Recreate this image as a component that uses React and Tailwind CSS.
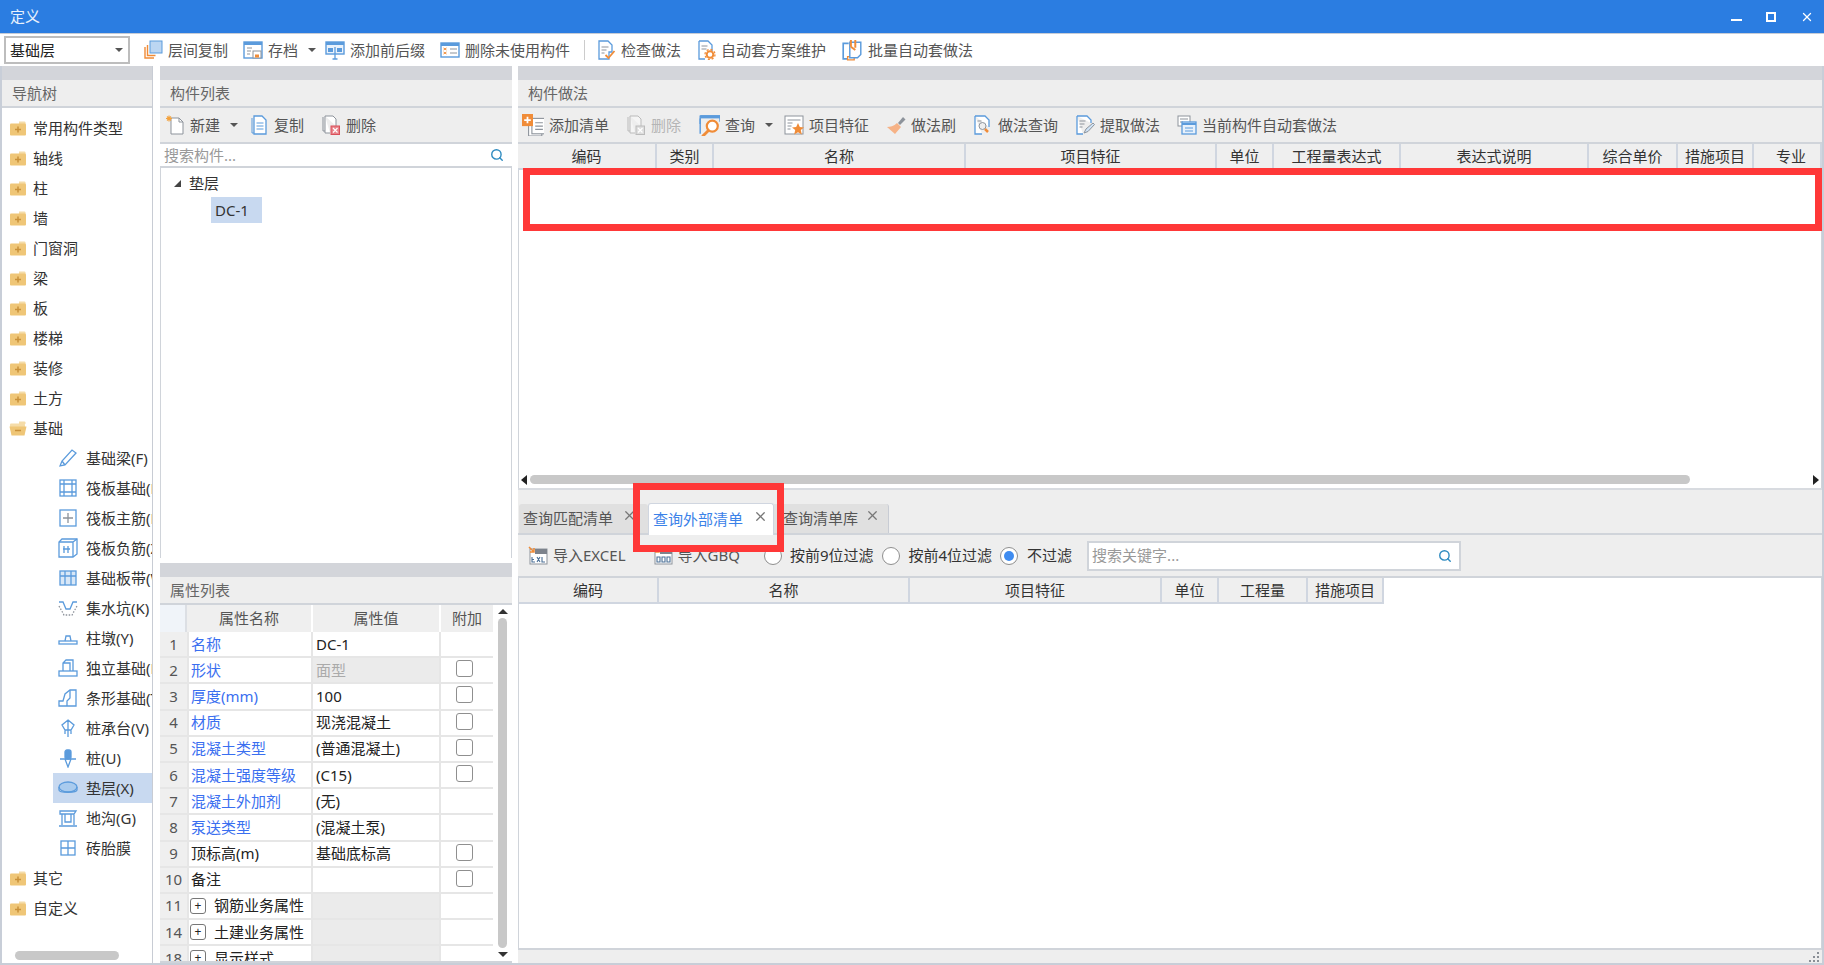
import { Search, X } from "lucide-react";

const B = "#5b9bdc";
const O = "#f08c38";
const G = "#8d939b";

// shared svg wrapper for the small toolbar pictures
const Ico = ({ children, size = 20 }) => (
  <svg width={size} height={size} viewBox="0 0 20 20" fill="none" className="shrink-0">
    {children}
  </svg>
);

const icons = {
  floorCopy: (
    <Ico>
      <path d="M2 7v11h9" stroke={O} strokeWidth="1.4" />
      <path d="M4.500 5v10.500h8" stroke={O} strokeWidth="1.4" />
      <rect x="7" y="1" width="12" height="12" fill="#bcd6f2" stroke={B} />
    </Ico>
  ),
  save: (
    <Ico>
      <rect x="1" y="2" width="18" height="16" fill="#fff" stroke={B} strokeWidth="1.4" />
      <rect x="1" y="2" width="18" height="3" fill={B} />
      <path d="M4 8h5M4 11h4M4 14h3" stroke={G} />
      <rect x="10" y="11" width="8" height="7" fill="#fff" stroke={G} />
      <rect x="12" y="14.500" width="4" height="3" fill={O} />
    </Ico>
  ),
  prefix: (
    <Ico>
      <rect x="1" y="2" width="18" height="12" fill="#eaf2fb" stroke={B} strokeWidth="1.4" />
      <rect x="1" y="2" width="18" height="3" fill={B} />
      <rect x="3" y="8" width="5" height="4" fill={B} />
      <rect x="12" y="8" width="5" height="4" fill={B} />
      <path d="M10 7v12M7.500 19h5" stroke={B} strokeWidth="1.3" />
    </Ico>
  ),
  unused: (
    <Ico>
      <rect x="1" y="3" width="18" height="14" fill="#fff" stroke={B} strokeWidth="1.4" />
      <rect x="1" y="3" width="18" height="3" fill={B} />
      <path d="M3.500 8l3 2m0-2l-3 2M3.500 12l3 2m0-2l-3 2" stroke={O} />
      <path d="M10 9h7M10 13h7" stroke={G} />
    </Ico>
  ),
  check: (
    <Ico>
      <path d="M3 1h9l4 4v7h-3v7H3z" fill="#fff" stroke={B} strokeWidth="1.3" />
      <path d="M5.500 7h7M5.500 10h5M5.500 13h3" stroke={G} />
      <path d="M9.500 15l3 3 6-7" stroke={O} strokeWidth="1.800" />
    </Ico>
  ),
  scheme: (
    <Ico>
      <path d="M3 1h9l4 4v6M9 19H3V1" fill="#fff" stroke={B} strokeWidth="1.3" />
      <path d="M5.500 6h6M5.500 9h5" stroke={G} />
      <circle cx="14" cy="14.500" r="3.300" stroke={O} strokeWidth="2" />
      <circle cx="14" cy="14.500" r="5" stroke={O} strokeWidth="1.300" strokeDasharray="2 1.900" />
    </Ico>
  ),
  batch: (
    <Ico size={22}>
      <path d="M7 4H2v14h5" stroke={B} strokeWidth="1.500" />
      <path d="M6 16h6v3H6z" fill="#fff" stroke={O} strokeWidth="1.200" />
      <path d="M8 3h10v11l-3 3H8z" fill="#fff" stroke={B} strokeWidth="1.300" />
      <path d="M9 1v6M13 1v7M9 7l4 3" stroke={O} strokeWidth="1.800" />
    </Ico>
  ),
  newDoc: (
    <Ico>
      <path d="M6 3h8l4 4v12H6z" fill="#fff" stroke={G} />
      <path d="M14 3v4h4" stroke={G} />
      <path d="M1 3.500h6M4 .5v6M2 1.500l4 4m0-4l-4 4" stroke="#f3a23d" strokeWidth="1.100" />
    </Ico>
  ),
  copy: (
    <Ico>
      <path d="M3 3v15h3" stroke={B} />
      <path d="M5 1h8l4 4v14H5z" fill="#fff" stroke={B} strokeWidth="1.300" />
      <path d="M7.500 8h7M7.500 11h7M7.500 14h7" stroke={B} />
    </Ico>
  ),
  del: (
    <Ico>
      <path d="M2 2v14h3" stroke={G} />
      <path d="M4 1h8l3 3v7M9 18H4V1" fill="#fff" stroke={G} />
      <rect x="10" y="11" width="8.500" height="8.500" fill="#e9838a" stroke="#d9505a" />
      <path d="M12 13l4.500 4.500m0-4.500L12 17.500" stroke="#fff" strokeWidth="1.200" />
    </Ico>
  ),
  delOff: (
    <Ico>
      <path d="M2 2v14h3" stroke="#bbb" />
      <path d="M4 1h8l3 3v7M9 18H4V1" fill="#f5f5f5" stroke="#bbb" />
      <rect x="10" y="11" width="8.500" height="8.500" fill="#ddd" stroke="#bbb" />
      <path d="M12 13l4.500 4.500m0-4.500L12 17.500" stroke="#fff" strokeWidth="1.200" />
    </Ico>
  ),
  addList: (
    <Ico size={22}>
      <rect x="6" y="7" width="12" height="13" fill="#fff" stroke={G} />
      <rect x="9" y="4" width="12" height="14" fill="#fff" stroke={G} />
      <path d="M12 8h7M12 11h7M12 14h7" stroke={G} />
      <rect x="0" y="0" width="10" height="11" fill={O} />
      <path d="M5 2.500v6M2 5.500h6" stroke="#fff" strokeWidth="1.600" />
    </Ico>
  ),
  query: (
    <Ico size={22}>
      <path d="M2 9V2h18v5" stroke={B} strokeWidth="1.300" />
      <rect x="2" y="1" width="18" height="3" fill={B} />
      <path d="M2 4v14" stroke={B} strokeWidth="1.300" />
      <circle cx="13" cy="11" r="5" fill="#fff" stroke={O} strokeWidth="2" />
      <path d="M9.500 15L4 20.500" stroke={O} strokeWidth="2.600" />
    </Ico>
  ),
  feature: (
    <Ico>
      <rect x="1" y="1" width="18" height="18" fill="#fff" stroke={G} />
      <path d="M3.500 5h13M3.500 8h5M3.500 11h4M3.500 14h3" stroke={G} />
      <path d="M14 8l1.800 4 4.200.4-3.200 2.700 1 4.400L14 17.200 10.200 19.500l1-4.400L8 12.400l4.200-.4z" fill={O} />
    </Ico>
  ),
  brush: (
    <Ico>
      <path d="M12 8l5-6 2.500 2.500-5.500 5.500z" fill={G} />
      <path d="M11 8l4 4-6 7-8-7c3 0 7-1 10-4z" fill="#f6b286" />
    </Ico>
  ),
  methodQuery: (
    <Ico>
      <path d="M2 1h10l4 4v7M9 19H2V1" fill="#fff" stroke={B} strokeWidth="1.300" />
      <circle cx="9.500" cy="11" r="3.500" stroke={G} />
      <path d="M12 14l3 3" stroke={O} strokeWidth="2.500" />
      <path d="M4.500 6h4" stroke={G} />
    </Ico>
  ),
  extract: (
    <Ico>
      <path d="M2 1h10l4 4v3M8 19H2V1" fill="#fff" stroke={B} strokeWidth="1.300" />
      <path d="M4.500 6h6M4.500 9h5M4.500 12h3" stroke={G} />
      <path d="M9 18l2-4 7-6 1.500 1.500-6.500 7z" fill="#cfe3f6" stroke={G} />
    </Ico>
  ),
  auto: (
    <Ico>
      <rect x="1" y="1" width="12" height="10" fill="#fff" stroke={G} />
      <path d="M3 4h8M3 7h3" stroke={G} />
      <rect x="5" y="7" width="14" height="12" fill="#e8f1fb" stroke={B} strokeWidth="1.300" />
      <path d="M5 9h14" stroke={B} strokeWidth="2" />
      <path d="M8 13h8M8 16h8" stroke={B} />
    </Ico>
  ),
  excel: (
    <Ico>
      <rect x="2" y="3" width="17" height="15" fill="#fff" stroke={G} />
      <rect x="7" y="3" width="12" height="5" fill="#7d838c" />
      <path d="M1 1l5 5m0-4v4H2" stroke={O} strokeWidth="1.500" />
      <path d="M4 11v5h3M4 13.500h2M9 11l3 5m0-5l-3 5M14 11v5h3" stroke="#4a6f96" strokeWidth="1.100" />
    </Ico>
  ),
  gbq: (
    <Ico>
      <rect x="2" y="3" width="17" height="15" fill="#fff" stroke={G} />
      <rect x="7" y="3" width="12" height="5" fill="#7d838c" />
      <path d="M1 1l5 5m0-4v4H2" stroke={O} strokeWidth="1.500" />
      <path d="M4 11h3v5H4zM9 11h3v5H9zM14 11h3v5h-3z" stroke="#4a6f96" strokeWidth="1.100" />
    </Ico>
  ),
};

const Caret = () => <span className="ml-[5px] -mr-[6px] w-0 h-0 border-x-[4px] border-x-transparent border-t-[4px] border-t-[#555]" />;

const ToolBtn = ({ icon, label, caret, disabled }) => (
  <div className="flex items-center gap-[5px] shrink-0">
    {icons[icon]}
    <span className={disabled ? "text-[#b5b5b5]" : "text-[#555]"}>{label}</span>
    {caret && <Caret />}
  </div>
);

const topTools = [
  { icon: "floorCopy", label: "层间复制" },
  { icon: "save", label: "存档", caret: true },
  { icon: "prefix", label: "添加前后缀" },
  { icon: "unused", label: "删除未使用构件" },
];
const topTools2 = [
  { icon: "check", label: "检查做法" },
  { icon: "scheme", label: "自动套方案维护" },
  { icon: "batch", label: "批量自动套做法" },
];
const listTools = [
  { icon: "newDoc", label: "新建", caret: true },
  { icon: "copy", label: "复制" },
  { icon: "del", label: "删除" },
];
const methodTools = [
  { icon: "addList", label: "添加清单" },
  { icon: "delOff", label: "删除", disabled: true },
  { icon: "query", label: "查询", caret: true },
  { icon: "feature", label: "项目特征" },
  { icon: "brush", label: "做法刷" },
  { icon: "methodQuery", label: "做法查询" },
  { icon: "extract", label: "提取做法" },
  { icon: "auto", label: "当前构件自动套做法" },
];

const Folder = ({ open }) => (
  <svg width="18" height="16" viewBox="0 0 18 16" className="shrink-0">
    <path d="M10 1.500h5.500a1 1 0 0 1 1 1V4H10z" fill="#f5dca8" />
    {open ? (
      <>
        <rect x="1" y="3.500" width="15" height="6" rx="1" fill="#f5dca8" />
        <path d="M0.500 6.500h17l-2 9H2.500z" fill="#efc677" />
        <path d="M6 10.500h6" stroke="#c9913a" strokeWidth="1.500" />
      </>
    ) : (
      <>
        <rect x="1" y="3.500" width="16" height="12" rx="1" fill="#efc677" />
        <path d="M6 9.500h6M9 6.500v6" stroke="#c9913a" strokeWidth="1.500" />
      </>
    )}
  </svg>
);

const navTop = ["常用构件类型", "轴线", "柱", "墙", "门窗洞", "梁", "板", "楼梯", "装修", "土方"];

const navIcon = {
  beam: <path d="M2 18l2-5L14 2l4 3L7 17zM4 13l3 4" />,
  raft: <><rect x="2" y="2" width="16" height="16" /><path d="M2 6h16M2 14h16M6 2v16M14 2v16" /></>,
  rebar: <><rect x="2" y="2" width="16" height="16" /><path d="M10 5v10M5 10h10" stroke={G} /></>,
  neg: <><path d="M4 1h15v15l-4 3H1V4z" /><path d="M1 4h14v15M15 4l4-3M6 8v7M10 8v7M5 11h7" /></>,
  strip: <><rect x="2" y="3" width="16" height="14" fill="#d8e7f7" /><path d="M7 3v14M13 3v14M2 8h16" /></>,
  pit: <><path d="M1 4h4l3 7h4l3-7h4" /><path d="M1 8l5 9h8l5-9" strokeDasharray="1.500 1.500" stroke={G} /></>,
  pier: <><rect x="1" y="13" width="18" height="3" /><path d="M7 13l1-5h4l1 5" /></>,
  indep: <><rect x="1" y="13" width="18" height="5" /><path d="M5 13V5l3-3h7v11M5 5h7v8" /></>,
  strip2: <><path d="M1 18v-5h4l2-7 5-4h6v16z" /><path d="M12 2v8l-3 3v5" /></>,
  cap: <><path d="M10 2l6 5-3 5H7L4 7zM10 2v10M7 12v4M13 12v4M10 12v7" /></>,
  pile: <><rect x="7" y="2" width="6" height="9" rx="2" fill={B} /><path d="M2 11h16M7 11l3 8 3-8" /></>,
  cushion: <><ellipse cx="10" cy="9" rx="9" ry="5" fill="#a9cbee" /><path d="M1 9v3c0 3 18 3 18 0V9" /></>,
  ditch: <><path d="M2 3h16l-2 3H2zM4 6v11M16 6v11M1 18h18M7 6v8h6V6" /></>,
  brick: <><rect x="3" y="3" width="14" height="14" /><path d="M10 3v14M3 10h14" /></>,
};

const navChildren = [
  ["beam", "基础梁(F)"],
  ["raft", "筏板基础(M)"],
  ["rebar", "筏板主筋(R)"],
  ["neg", "筏板负筋(Z)"],
  ["strip", "基础板带(W)"],
  ["pit", "集水坑(K)"],
  ["pier", "柱墩(Y)"],
  ["indep", "独立基础(D)"],
  ["strip2", "条形基础(T)"],
  ["cap", "桩承台(V)"],
  ["pile", "桩(U)"],
  ["cushion", "垫层(X)"],
  ["ditch", "地沟(G)"],
  ["brick", "砖胎膜"],
];

const PanelHead = ({ title }) => (
  <>
    <div className="h-[14px] bg-[#d3d5da] shrink-0" />
    <div className="h-[28px] shrink-0 flex items-center pl-[10px] bg-[#eeeeee] border-b-2 border-[#d0d4da] text-[#666]">{title}</div>
  </>
);

const NavFolder = ({ label, open }) => (
  <div className="h-[30px] flex items-center gap-[6px] pl-[7px] whitespace-nowrap">
    <Folder open={open} />
    <span>{label}</span>
  </div>
);

const props = [
  ["1", "名称", "DC-1", true, false],
  ["2", "形状", "面型", true, true, "off"],
  ["3", "厚度(mm)", "100", true, true],
  ["4", "材质", "现浇混凝土", true, true],
  ["5", "混凝土类型", "(普通混凝土)", true, true],
  ["6", "混凝土强度等级", "(C15)", true, true],
  ["7", "混凝土外加剂", "(无)", true, false],
  ["8", "泵送类型", "(混凝土泵)", true, false],
  ["9", "顶标高(m)", "基础底标高", false, true],
  ["10", "备注", "", false, true],
];
const groups = [
  ["11", "钢筋业务属性"],
  ["14", "土建业务属性"],
  ["18", "显示样式"],
];

const Check = () => <span className="block w-[17px] h-[17px] -mt-[3px] ml-[15px] border border-[#8f8f8f] rounded-[3px] bg-white" />;

const methodCols = [
  ["编码", "w-[139px]"],
  ["类别", "w-[57px]"],
  ["名称", "w-[252px]"],
  ["项目特征", "w-[251px]"],
  ["单位", "w-[57px]"],
  ["工程量表达式", "w-[127px]"],
  ["表达式说明", "w-[188px]"],
  ["综合单价", "w-[89px]"],
  ["措施项目", "w-[76px]"],
  ["专业", "w-[68px] pl-[8px]"],
];
const externalCols = [
  ["编码", "w-[140px]"],
  ["名称", "w-[251px]"],
  ["项目特征", "w-[252px]"],
  ["单位", "w-[57px]"],
  ["工程量", "w-[89px]"],
  ["措施项目", "w-[76px]"],
];

const HeadCell = ({ label, width }) => (
  <div className={`${width} shrink-0 h-full flex items-center justify-center bg-[#efefef] border-r-2 border-b-2 border-[#d0d6e0] text-[#333] whitespace-nowrap`}>{label}</div>
);

const Radio = ({ on }) => (
  <span className="w-[18px] h-[18px] rounded-full bg-white border border-[#8f8f8f] flex items-center justify-center shrink-0">
    {on && <span className="w-[10px] h-[10px] rounded-full bg-[#3f8cf0]" />}
  </span>
);

const App = () => {
  return (
    <div
      className="relative w-[1824px] h-[965px] overflow-hidden flex flex-col bg-white text-[15px] leading-none text-[#333]"
      style={{ fontFamily: '"Noto Sans", "Noto Sans CJK SC", sans-serif' }}
    >
      {/* title bar */}
      <div className="h-[33px] shrink-0 bg-[#2b7de1] text-[#e8f1fc] flex items-center justify-between pl-[10px] pr-[10px]">
        <span>定义</span>
        <div className="flex items-center gap-[24px]">
          <span className="w-[11px] h-[2px] mt-[6px] bg-white" />
          <span className="w-[10px] h-[10px] border-2 border-white" />
          <X size={14} strokeWidth={2.2} className="text-white" />
        </div>
      </div>

      {/* main toolbar */}
      <div className="h-[33px] shrink-0 border-t border-[#c6ccd6] pl-[4px] flex items-center gap-[15px] text-[#444]">
        <div className="w-[126px] -mr-[2px] h-[28px] border-2 border-[#bdbdbd] flex items-center justify-between pl-[4px] pr-[5px] text-[#222]">
          <span>基础层</span>
          <span className="w-0 h-0 border-x-[4px] border-x-transparent border-t-[4px] border-t-[#555]" />
        </div>
        {topTools.map((t) => (
          <ToolBtn key={t.label} {...t} />
        ))}
        <span className="w-[1px] h-[20px] -ml-[1px] -mr-[4px] bg-[#ccc]" />
        {topTools2.map((t) => (
          <ToolBtn key={t.label} {...t} />
        ))}
      </div>

      <div className="flex-1 min-h-0 flex border-x-2 border-b-2 border-[#c8ced8] bg-white">
        {/* nav tree */}
        <div className="w-[151px] shrink-0 flex flex-col border-r border-[#c8ccd4] overflow-hidden">
          <PanelHead title="导航树" />
          <div className="flex-1 flex flex-col pt-[5px] min-h-0">
            {navTop.map((n) => (
              <NavFolder key={n} label={n} />
            ))}
            <NavFolder label="基础" open />
            {navChildren.map(([ic, label]) => (
              <div key={label} className={`h-[30px] ml-[51px] flex items-center gap-[8px] pl-[5px] whitespace-nowrap ${label === "垫层(X)" ? "bg-[#c8d9f0]" : ""}`}>
                <svg width="20" height="20" viewBox="0 0 20 20" fill="none" stroke={B} strokeWidth="1.300" className="shrink-0">
                  {navIcon[ic]}
                </svg>
                <span>{label}</span>
              </div>
            ))}
            <NavFolder label="其它" />
            <NavFolder label="自定义" />
            <div className="mt-auto mb-[3px] ml-[13px] w-[104px] h-[9px] rounded-full bg-[#c8c8c8]" />
          </div>
        </div>

        {/* component list + properties */}
        <div className="w-[352px] ml-[7px] shrink-0 flex flex-col overflow-hidden">
          <PanelHead title="构件列表" />
          <div className="h-[36px] shrink-0 bg-[#eeeeee] border-b-2 border-[#d0d4da] pl-[5px] flex items-center gap-[17px]">
            {listTools.map((t) => (
              <ToolBtn key={t.label} {...t} />
            ))}
          </div>
          <div className="h-[24px] shrink-0 border-b-2 border-[#d0d4da] pl-[4px] pr-[8px] flex items-center justify-between text-[#999]">
            <span>搜索构件...</span>
            <Search size={14} strokeWidth={2.4} className="text-[#2e8bc0]" />
          </div>
          <div className="h-[390px] shrink-0 border-x border-[#d0d4da] pt-[2px]">
            <div className="h-[26px] flex items-center pl-[13px] gap-[8px]">
              <span className="w-0 h-0 border-l-[7px] border-l-transparent border-b-[7px] border-b-[#444]" />
              <span>垫层</span>
            </div>
            <div className="ml-[50px] mt-[1px] w-[51px] h-[26px] flex items-center pl-[4px] bg-[#c8d9f0]">DC-1</div>
          </div>
          <div className="h-[5px] shrink-0" />
          <PanelHead title="属性列表" />
          <div className="flex-1 min-h-0 flex overflow-hidden border-b-2 border-[#d0d4da]">
            <div className="w-[333px] shrink-0 flex flex-col overflow-hidden">
              <div className="h-[27px] shrink-0 flex text-[#555] bg-[#efefef]">
                <div className="w-[27px] bg-[#f0f4f9] border-r-2 border-[#dcdfe4]" />
                <div className="w-[126px] flex items-center justify-center border-r-2 border-white">属性名称</div>
                <div className="w-[128px] flex items-center justify-center border-r-2 border-white">属性值</div>
                <div className="w-[52px] flex items-center justify-center">附加</div>
              </div>
              {props.map(([no, name, value, blue, chk, off]) => (
                <div key={no} className="h-[26.200px] shrink-0 flex border-b-2 border-[#e6e6e6]">
                  <div className="w-[27px] bg-[#efefef] flex items-center justify-center text-[#555]">{no}</div>
                  <div className={`w-[126px] flex items-center pl-[2px] border-x-2 border-[#e6e6e6] whitespace-nowrap ${blue ? "text-[#3a6ff0]" : "text-[#222]"}`}>{name}</div>
                  <div className={`w-[128px] flex items-center pl-[3px] border-r-2 border-[#e6e6e6] ${off ? "bg-[#ebebeb] text-[#aaa]" : "text-[#222]"}`}>{value}</div>
                  <div className="w-[51px] flex items-center">{chk && <Check />}</div>
                </div>
              ))}
              {groups.map(([no, name]) => (
                <div key={no} className="h-[26.200px] shrink-0 flex border-b-2 border-[#e6e6e6]">
                  <div className="w-[27px] bg-[#efefef] flex items-center justify-center text-[#555]">{no}</div>
                  <div className="w-[126px] flex items-center gap-[8px] pl-[1px] border-x-2 border-[#e6e6e6] whitespace-nowrap text-[#222]">
                    <span className="w-[16px] h-[16px] border border-[#777] rounded-[3px] flex items-center justify-center text-[12px] shrink-0">+</span>
                    {name}
                  </div>
                  <div className="w-[128px] bg-[#ebebeb] border-r-2 border-[#e6e6e6]" />
                  <div className="w-[51px]" />
                </div>
              ))}
            </div>
            <div className="flex-1 flex flex-col items-center py-[4px]">
              <span className="w-0 h-0 border-x-[5px] border-x-transparent border-b-[5px] border-b-[#333]" />
              <div className="flex-1 w-[9px] my-[4px] rounded-full bg-[#c8c8c8]" />
              <span className="w-0 h-0 border-x-[5px] border-x-transparent border-t-[5px] border-t-[#333]" />
            </div>
          </div>
        </div>

        {/* methods panel */}
        <div className="flex-1 ml-[6px] min-w-0 flex flex-col overflow-hidden">
          <PanelHead title="构件做法" />
          <div className="h-[36px] shrink-0 bg-[#eeeeee] border-b-2 border-[#d0d4da] pl-[4px] flex items-center gap-[17px]">
            {methodTools.map((t) => (
              <ToolBtn key={t.label} {...t} />
            ))}
          </div>
          <div className="h-[26px] shrink-0 flex">
            {methodCols.map(([l, w]) => (
              <HeadCell key={l} label={l} width={w} />
            ))}
          </div>
          <div className="flex-1 border-x border-[#d0d4da]" />
          <div className="h-[14px] shrink-0 flex items-start pt-[1px] px-[2px] gap-[3px] border-x border-[#d0d4da]">
            <span className="w-0 h-0 border-y-[5px] border-y-transparent border-r-[6px] border-r-[#222]" />
            <div className="w-[1160px] h-[9px] rounded-full bg-[#c8c8c8]" />
            <span className="ml-auto w-0 h-0 border-y-[5px] border-y-transparent border-l-[6px] border-l-[#222]" />
          </div>
          <div className="h-[47px] shrink-0 border-t-2 border-[#d8dbe0] bg-[#eeeeee] border-b-2 border-b-[#d0d4da] flex items-end pl-[1px]">
            <div className="h-[29px] w-[129px] bg-[#e0e0e0] rounded-t-[3px] flex items-center pl-[4px] gap-[9px] text-[#555]">
              查询匹配清单
              <X size={15} className="text-[#777] -mt-[6px]" />
            </div>
            <div className="h-[32px] w-[126px] -mb-[2px] bg-white rounded-t-[3px] border border-[#d0d6e0] border-b-0 flex items-center pl-[4px] gap-[10px] text-[#3b82e8]">
              查询外部清单
              <X size={15} className="text-[#777] -mt-[6px]" />
            </div>
            <div className="h-[29px] w-[115px] bg-[#e0e0e0] rounded-tr-[3px] border-r border-[#c8ccd4] flex items-center pl-[9px] gap-[7px] text-[#555]">
              查询清单库
              <X size={15} className="text-[#777] -mt-[6px]" />
            </div>
          </div>
          <div className="h-[43px] shrink-0 bg-[#eeeeee] border-b-2 border-[#d0d4da] pl-[10px] flex items-center">
            <ToolBtn icon="excel" label="导入EXCEL" />
            <span className="w-[27px]" />
            <ToolBtn icon="gbq" label="导入GBQ" />
            <span className="w-[24px]" />
            <Radio />
            <span className="ml-[8px] text-[#333]">按前9位过滤</span>
            <span className="w-[8px]" />
            <Radio />
            <span className="ml-[9px] text-[#333]">按前4位过滤</span>
            <span className="w-[8px]" />
            <Radio on />
            <span className="ml-[9px] text-[#333]">不过滤</span>
            <div className="ml-[15px] w-[374px] h-[30px] bg-white border-2 border-[#d0d4da] flex items-center justify-between pl-[3px] pr-[7px] text-[#999]">
              搜索关键字...
              <Search size={14} strokeWidth={2.4} className="text-[#2e8bc0]" />
            </div>
          </div>
          <div className="h-[26px] shrink-0 flex border-x border-[#d0d4da]">
            {externalCols.map(([l, w]) => (
              <HeadCell key={l} label={l} width={w} />
            ))}
          </div>
          <div className="h-[346px] shrink-0 border-x border-b-2 border-[#d0d4da]" />
          <div className="h-[13px] shrink-0 bg-[#eeeeee] flex justify-end items-end pr-[2px] pb-[1px]">
            <svg width="12" height="10" viewBox="0 0 12 10" fill="#8a8f96">
              <rect x="9" y="0" width="2" height="2" />
              <rect x="5" y="4" width="2" height="2" />
              <rect x="9" y="4" width="2" height="2" />
              <rect x="1" y="8" width="2" height="2" />
              <rect x="5" y="8" width="2" height="2" />
              <rect x="9" y="8" width="2" height="2" />
            </svg>
          </div>
        </div>
      </div>

      {/* red annotation frames drawn over the screenshot */}
      <div className="absolute left-[523px] top-[168px] w-[1299px] h-[63px] border-[7px] border-[#ff3838]" />
      <div className="absolute left-[633px] top-[483px] w-[151px] h-[69px] border-[7px] border-[#ff3838]" />
    </div>
  );
};

export default App;
